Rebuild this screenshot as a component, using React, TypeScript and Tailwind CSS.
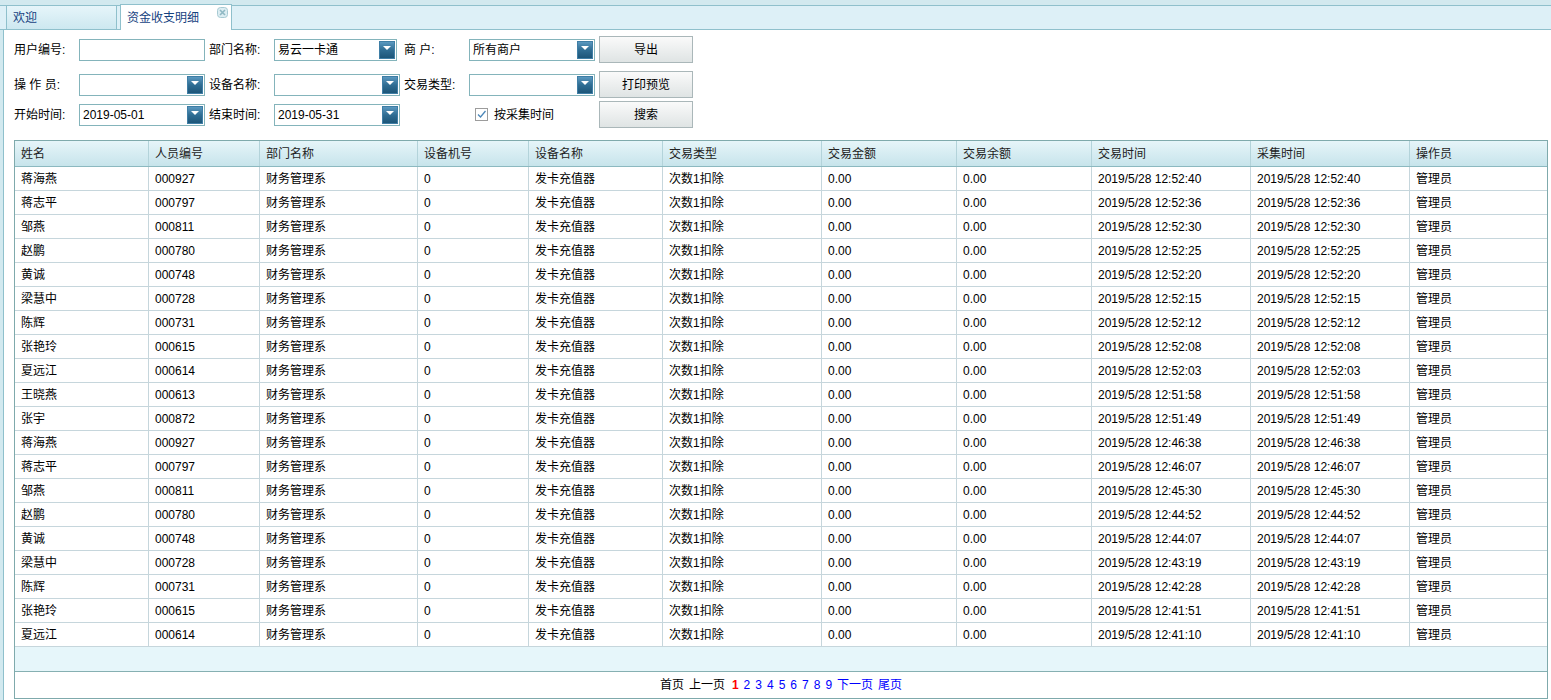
import React from "react";

const FONT = { fontFamily: '"Liberation Sans", "Noto Sans CJK SC", sans-serif' };

function Arrow() {
  return (
    <span className="absolute right-[1px] top-[1px] w-[16px] h-[18px] bg-linear-to-b from-[#5a98bf] via-[#2f6d93] to-[#1d5679] border border-[#3f7ea5] flex justify-center">
      <svg width="8" height="5" viewBox="0 0 8 5" className="mt-[4px]">
        <path d="M0 0 H8 L4 4 Z" fill="#ffffff" />
      </svg>
    </span>
  );
}

function Field({ w, value, arrow }: { w: string; value?: string; arrow?: boolean }) {
  return (
    <div className={`relative h-[22px] border border-[#84b4bb] bg-white ${w}`}>
      <span className="absolute left-[3px] top-[3px] text-[12px] leading-[14px] text-black">{value}</span>
      {arrow && <Arrow />}
    </div>
  );
}

function Label({ children }: { children: React.ReactNode }) {
  return <div className="w-[65px] text-[12px] text-black whitespace-pre">{children}</div>;
}

function Btn({ children }: { children: React.ReactNode }) {
  return (
    <div className="ml-[4px] w-[94px] h-[27px] border border-[#aab7b9] bg-linear-to-b from-[#fafafa] to-[#dfe4e4] flex items-center justify-center text-[12px] text-black">
      {children}
    </div>
  );
}

const cols = [
  "姓名",
  "人员编号",
  "部门名称",
  "设备机号",
  "设备名称",
  "交易类型",
  "交易金额",
  "交易余额",
  "交易时间",
  "采集时间",
  "操作员",
];

const rows: [string, string, string][] = [
  ["蒋海燕", "000927", "12:52:40"],
  ["蒋志平", "000797", "12:52:36"],
  ["邹燕", "000811", "12:52:30"],
  ["赵鹏", "000780", "12:52:25"],
  ["黄诚", "000748", "12:52:20"],
  ["梁慧中", "000728", "12:52:15"],
  ["陈辉", "000731", "12:52:12"],
  ["张艳玲", "000615", "12:52:08"],
  ["夏远江", "000614", "12:52:03"],
  ["王晓燕", "000613", "12:51:58"],
  ["张宇", "000872", "12:51:49"],
  ["蒋海燕", "000927", "12:46:38"],
  ["蒋志平", "000797", "12:46:07"],
  ["邹燕", "000811", "12:45:30"],
  ["赵鹏", "000780", "12:44:52"],
  ["黄诚", "000748", "12:44:07"],
  ["梁慧中", "000728", "12:43:19"],
  ["陈辉", "000731", "12:42:28"],
  ["张艳玲", "000615", "12:41:51"],
  ["夏远江", "000614", "12:41:10"],
];

const gridCols =
  "grid grid-cols-[134px_111px_158px_111px_134px_159px_135px_135px_159px_159px_137px]";

export default function App() {
  return (
    <div className="w-[1551px] h-[700px] bg-white overflow-hidden text-black" style={FONT}>
      {/* Tab bar */}
      <div className="h-[30px] bg-[#d2e9ef] pt-[5px]">
        <div className="h-[25px] border-t border-b border-[#8fc0cc] bg-[#ddf0f7] flex items-end pl-[6px] gap-[3px]">
          <div className="-mb-px -mt-px h-[25px] w-[111px] border border-[#8fc0cc] bg-linear-to-b from-[#e6f5fa] to-[#cde8f0] flex items-center pl-[6px] text-[12px] text-[#16427f]">
            欢迎
          </div>
          <div className="relative -mb-px -mt-px h-[26px] w-[112px] border border-b-0 border-[#8fc0cc] bg-white flex items-center pl-[6px] text-[12px] text-[#16427f]">
            资金收支明细
            <svg width="11" height="11" viewBox="0 0 11 11" className="absolute right-[3px] top-[2px]">
              <rect x="0.5" y="0.5" width="10" height="10" rx="3" fill="#dcedf2" stroke="#a7cad3" />
              <path d="M3 3 L8 8 M8 3 L3 8" stroke="#8fb8c3" strokeWidth="1.6" />
            </svg>
          </div>
        </div>
      </div>

      {/* Content */}
      <div className="flex h-[670px]">
        <div className="w-[3px] bg-[#d2e9ef]" />
        <div className="flex-1 border-l border-[#8fc0cc] pl-[10px]">
          {/* Form */}
          <div className="mt-[6px] flex items-center h-[27px]">
            <Label>用户编号:</Label>
            <Field w="w-[126px]" />
            <div className="w-[4px]" />
            <Label>部门名称:</Label>
            <Field w="w-[123px]" value="易云一卡通" arrow />
            <div className="w-[7px]" />
            <Label>商 户:</Label>
            <Field w="w-[126px]" value="所有商户" arrow />
            <Btn>导出</Btn>
          </div>
          <div className="mt-[8px] flex items-center h-[27px]">
            <Label>操 作 员:</Label>
            <Field w="w-[126px]" arrow />
            <div className="w-[4px]" />
            <Label>设备名称:</Label>
            <Field w="w-[126px]" arrow />
            <div className="w-[4px]" />
            <Label>交易类型:</Label>
            <Field w="w-[126px]" arrow />
            <Btn>打印预览</Btn>
          </div>
          <div className="mt-[3px] flex items-center h-[27px]">
            <Label>开始时间:</Label>
            <Field w="w-[126px]" value="2019-05-01" arrow />
            <div className="w-[4px]" />
            <Label>结束时间:</Label>
            <Field w="w-[126px]" value="2019-05-31" arrow />
            <div className="w-[4px]" />
            <div className="w-[191px] flex items-center pl-[71px]">
              <span className="w-[13px] h-[13px] border border-[#9c9c9c] bg-white flex items-center justify-center">
                <svg width="11" height="11" viewBox="0 0 11 11">
                  <path d="M2 5.5 L4.5 8 L9.5 2" stroke="#4a86b8" strokeWidth="1.3" fill="none" />
                </svg>
              </span>
              <span className="ml-[6px] text-[12px]">按采集时间</span>
            </div>
            <Btn>搜索</Btn>
          </div>

          {/* Table */}
          <div className="mt-[12px] w-[1534px] border border-[#7faaac]">
            <div className={`${gridCols} h-[26px] bg-linear-to-b from-[#e6f5f9] to-[#c7e4eb] border-b border-[#8cb9c0]`}>
              {cols.map((c, i) => (
                <div
                  key={c}
                  className={`flex items-center pl-[6px] text-[12px] text-[#222] ${i < cols.length - 1 ? "border-r border-[#b3d3da]" : ""}`}
                >
                  {c}
                </div>
              ))}
            </div>
            {rows.map((r, ri) => {
              const t = "2019/5/28 " + r[2];
              const cells = [r[0], r[1], "财务管理系", "0", "发卡充值器", "次数1扣除", "0.00", "0.00", t, t, "管理员"];
              return (
                <div key={ri} className={`${gridCols} h-[24px]`}>
                  {cells.map((c, i) => (
                    <div
                      key={i}
                      className={`flex items-center pl-[6px] text-[12px] border-b border-[#c6d6dc] ${i < cells.length - 1 ? "border-r" : ""}`}
                    >
                      {c}
                    </div>
                  ))}
                </div>
              );
            })}
            <div className="h-[25px] bg-[#e6f6fa] border-b border-[#86b0b2]" />
            <div className="h-[26px] flex items-center justify-center text-[12px]">
              <span className="text-black">首页</span>
              <span className="ml-[5px] text-black">上一页</span>
              <span className="ml-[7px] text-[#ff0000] font-bold">1</span>
              {["2", "3", "4", "5", "6", "7", "8", "9"].map((n) => (
                <span key={n} className="ml-[5px] text-[#0000ff]">
                  {n}
                </span>
              ))}
              <span className="ml-[5px] text-[#0000ff]">下一页</span>
              <span className="ml-[5px] text-[#0000ff]">尾页</span>
            </div>
          </div>
        </div>
      </div>
    </div>
  );
}
